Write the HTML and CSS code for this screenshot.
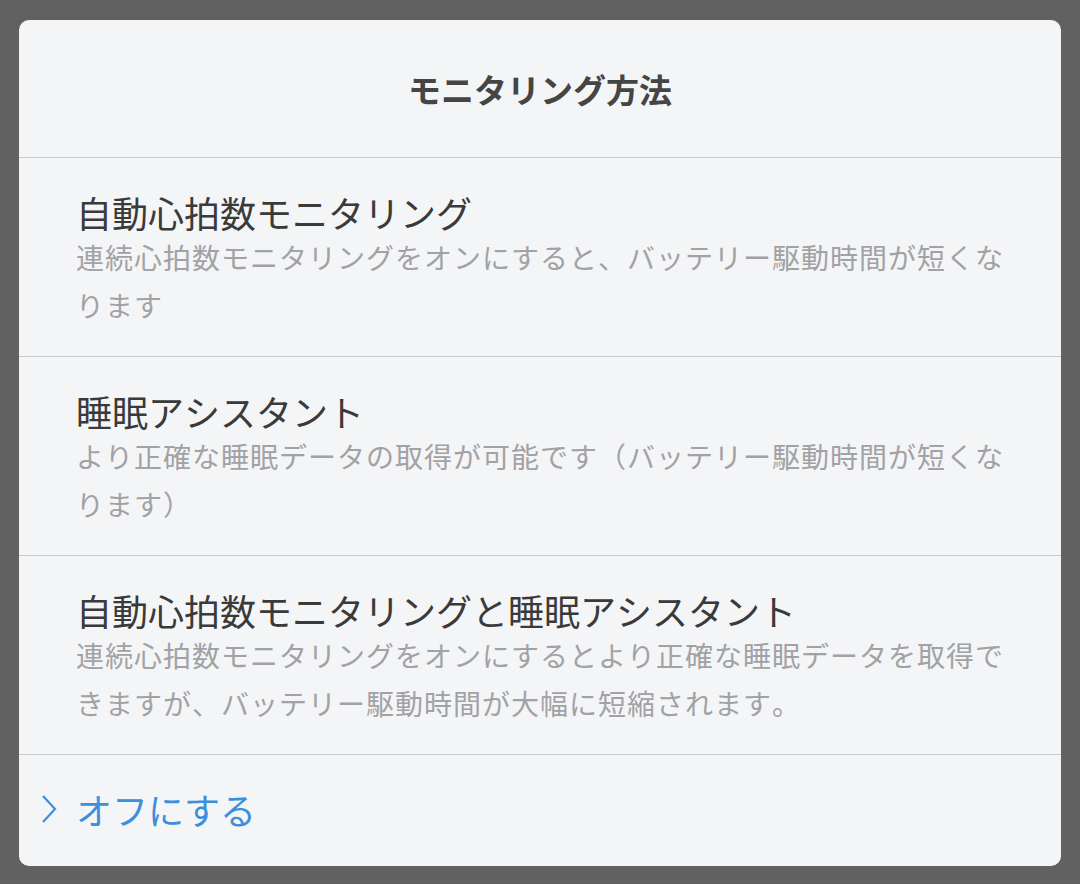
FILE: index.html
```html
<!DOCTYPE html>
<html lang="ja">
<head>
    <meta charset="UTF-8">
    <meta name="viewport" content="width=device-width, initial-scale=1.0">
    <title>モニタリング方法</title>
    <link rel="stylesheet" href="styles.css">
</head>
<body>
    <div class="dialog">
        <div class="dialog-title">モニタリング方法</div>

        <div class="option">
            <div class="option-name">自動心拍数モニタリング</div>
            <div class="option-desc">連続心拍数モニタリングをオンにすると、バッテリー駆動時間が短くなります</div>
        </div>

        <div class="option">
            <div class="option-name">睡眠アシスタント</div>
            <div class="option-desc">より正確な睡眠データの取得が可能です（バッテリー駆動時間が短くなります）</div>
        </div>

        <div class="option">
            <div class="option-name">自動心拍数モニタリングと睡眠アシスタント</div>
            <div class="option-desc">連続心拍数モニタリングをオンにするとより正確な睡眠データを取得できますが、バッテリー駆動時間が大幅に短縮されます。</div>
        </div>

        <div class="option-off">
            <svg class="chevron" width="16" height="28" viewBox="0 0 16 28">
                <path d="M2 1 L14 14 L2 27" fill="none" stroke="#3d8fdc" stroke-width="2.2"/>
            </svg>
            <span>オフにする</span>
        </div>
    </div>
</body>
</html>
```

FILE: styles.css
```css
body {
    margin: 0;
    padding: 20px 19px 18px;
    background-color: #616161;
    font-family: "Noto Sans CJK JP", "Noto Sans", sans-serif;
    font-kerning: none;
}
.dialog {
    background-color: #f4f5f7;
    border-radius: 10px;
    overflow: hidden;
}
.dialog-title {
    height: 137px;
    display: flex;
    align-items: center;
    justify-content: center;
    font-size: 33px;
    font-weight: 700;
    color: #454545;
    border-bottom: 1px solid #cbcbcd;
}
.option {
    padding: 33px 40px 27px 57px;
    border-bottom: 1px solid #cbcbcd;
}
.option-name {
    font-size: 36px;
    line-height: 42px;
    color: #3a3a3a;
}
.option-desc {
    font-size: 28px;
    line-height: 48px;
    letter-spacing: 1px;
    color: #a2a2a4;
}
.option-off {
    height: 107px;
    padding-bottom: 4px;
    display: flex;
    align-items: center;
    padding-left: 22px;
    font-size: 36px;
    color: #3d8fdc;
}
.chevron {
    margin-right: 19px;
}
```
